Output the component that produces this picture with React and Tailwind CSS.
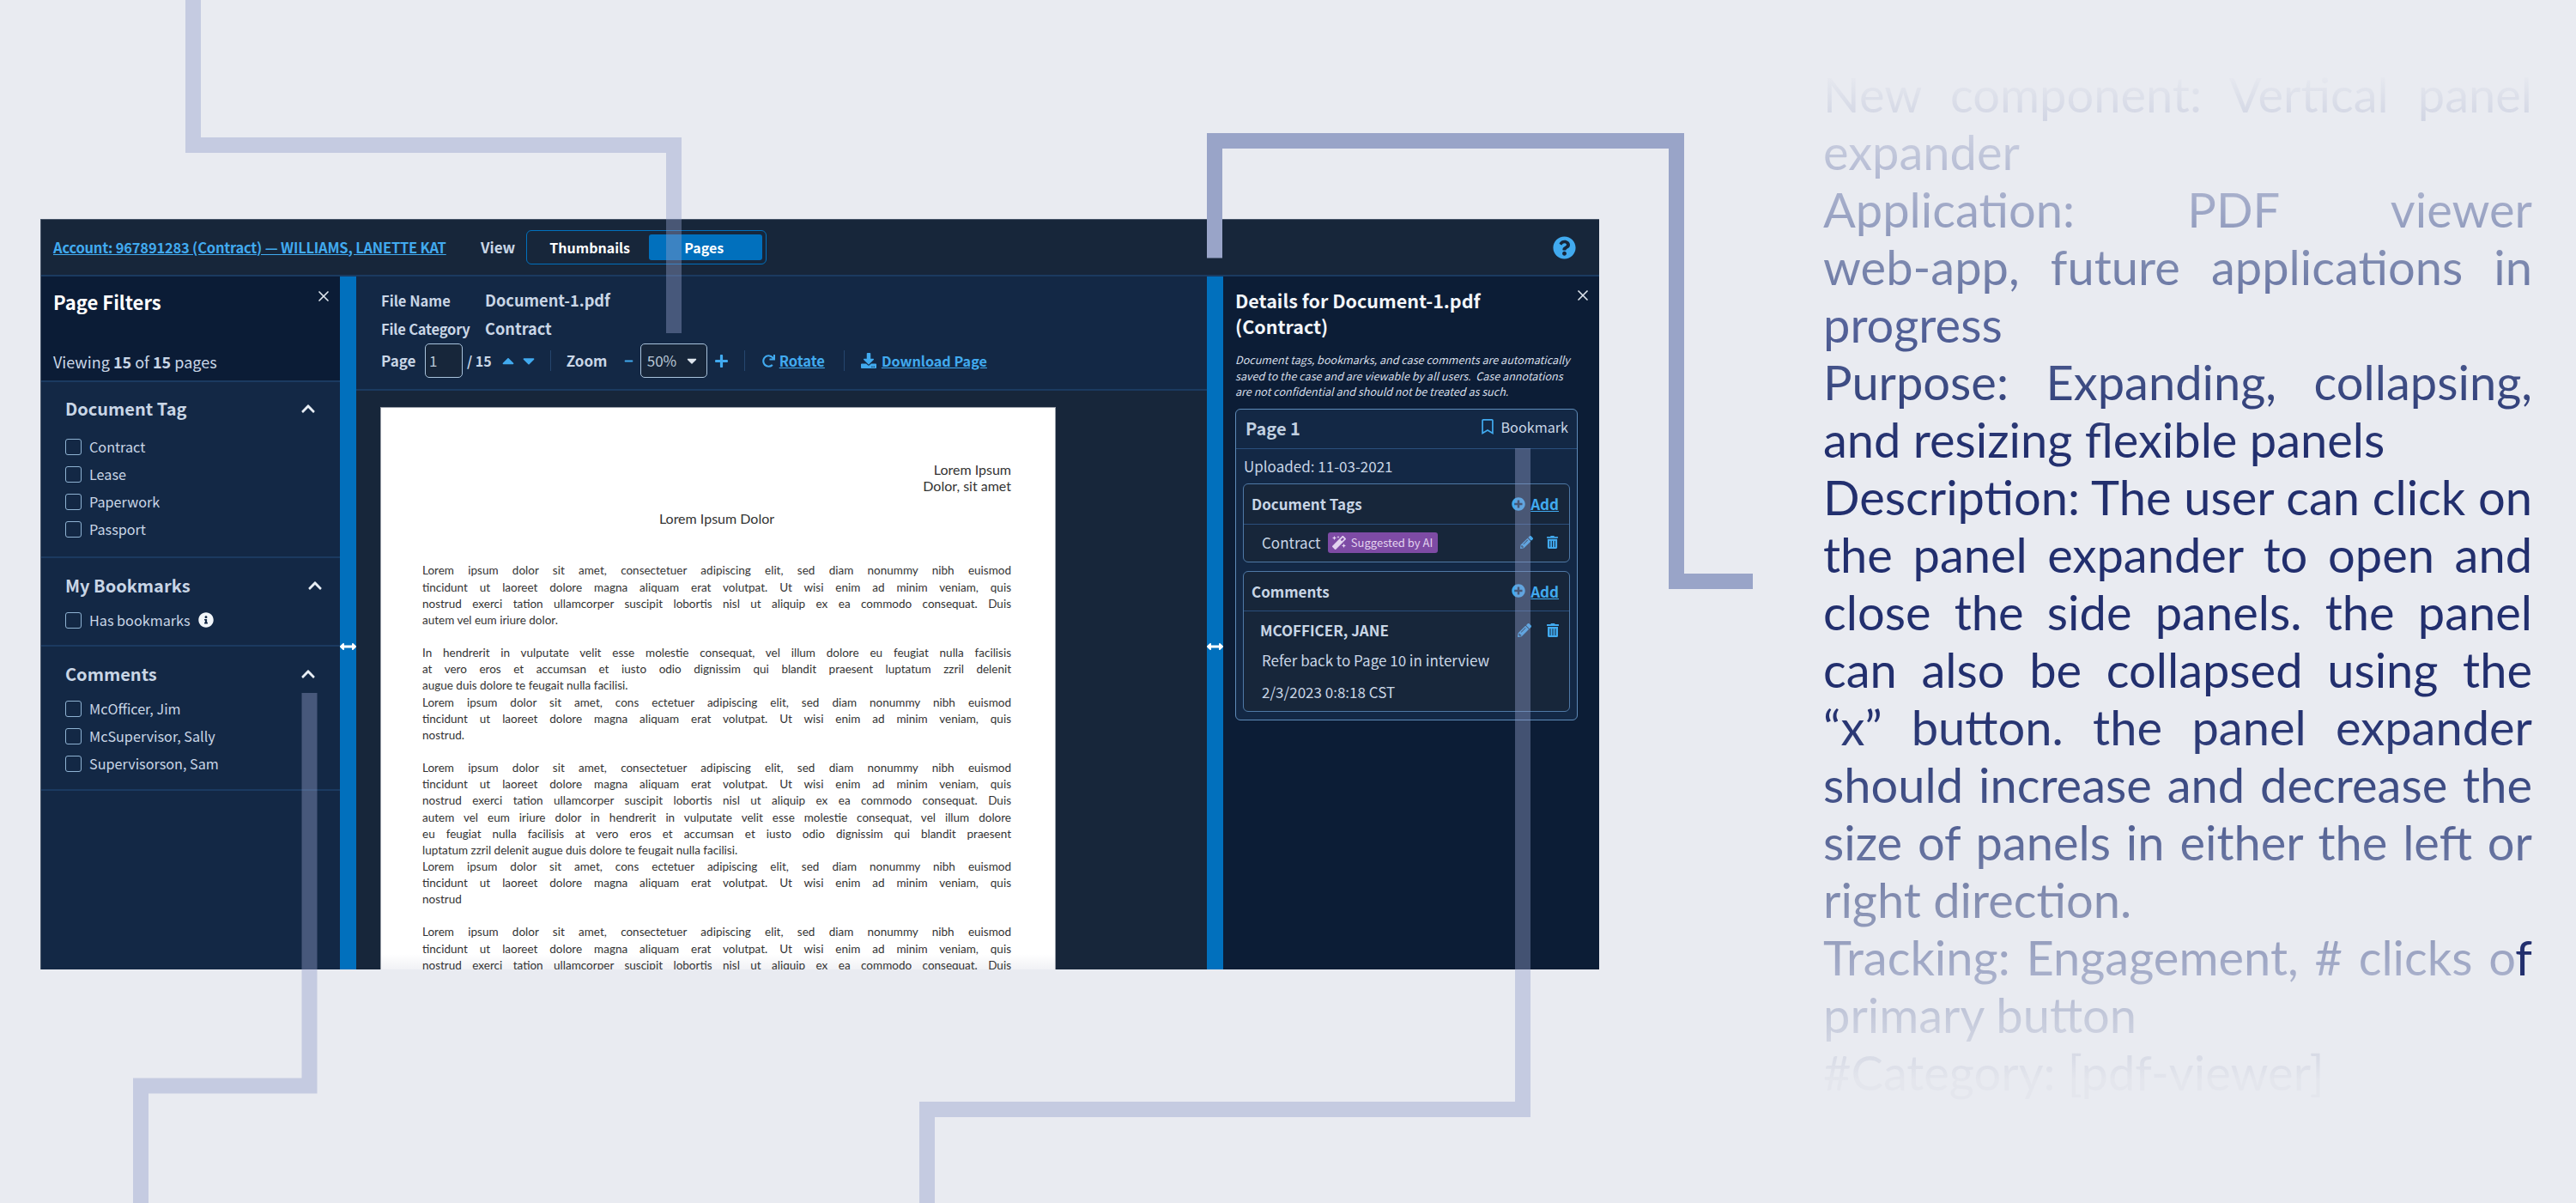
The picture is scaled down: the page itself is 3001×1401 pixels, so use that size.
import React from "react";
import { FaChevronUp, FaRegBookmark, FaArrowsAltH, FaPlusCircle, FaQuestionCircle, FaInfoCircle, FaMagic, FaRedo, FaDownload, FaPencilAlt, FaTrashAlt, FaCaretUp, FaCaretDown, FaMinus, FaPlus } from "react-icons/fa";
import { X } from "lucide-react";

const DOC = [
  { gap: "mt-[42px]", lines: ["Lorem ipsum dolor sit amet, consectetuer adipiscing elit, sed diam nonummy nibh euismod", "tincidunt ut laoreet dolore magna aliquam erat volutpat. Ut wisi enim ad minim veniam, quis", "nostrud exerci tation ullamcorper suscipit lobortis nisl ut aliquip ex ea commodo consequat. Duis"], last: "autem vel eum iriure dolor." },
  { gap: "mt-[19px]", lines: ["In hendrerit in vulputate velit esse molestie consequat, vel illum dolore eu feugiat nulla facilisis", "at vero eros et accumsan et iusto odio dignissim qui blandit praesent luptatum zzril delenit"], last: "augue duis dolore te feugait nulla facilisi." },
  { gap: "", lines: ["Lorem ipsum dolor sit amet, cons ectetuer adipiscing elit, sed diam nonummy nibh euismod", "tincidunt ut laoreet dolore magna aliquam erat volutpat. Ut wisi enim ad minim veniam, quis"], last: "nostrud." },
  { gap: "mt-[19px]", lines: ["Lorem ipsum dolor sit amet, consectetuer adipiscing elit, sed diam nonummy nibh euismod", "tincidunt ut laoreet dolore magna aliquam erat volutpat. Ut wisi enim ad minim veniam, quis", "nostrud exerci tation ullamcorper suscipit lobortis nisl ut aliquip ex ea commodo consequat. Duis", "autem vel eum iriure dolor in hendrerit in vulputate velit esse molestie consequat, vel illum dolore", "eu feugiat nulla facilisis at vero eros et accumsan et iusto odio dignissim qui blandit praesent"], last: "luptatum zzril delenit augue duis dolore te feugait nulla facilisi." },
  { gap: "", lines: ["Lorem ipsum dolor sit amet, cons ectetuer adipiscing elit, sed diam nonummy nibh euismod", "tincidunt ut laoreet dolore magna aliquam erat volutpat. Ut wisi enim ad minim veniam, quis"], last: "nostrud" },
  { gap: "mt-[19px]", lines: ["Lorem ipsum dolor sit amet, consectetuer adipiscing elit, sed diam nonummy nibh euismod", "tincidunt ut laoreet dolore magna aliquam erat volutpat. Ut wisi enim ad minim veniam, quis", "nostrud exerci tation ullamcorper suscipit lobortis nisl ut aliquip ex ea commodo consequat. Duis"], last: "" },
];

const NOTES = [
  ["New component: Vertical panel", true],
  ["expander", false],
  ["Application: PDF viewer", true],
  ["web-app, future applications in", true],
  ["progress", false],
  ["Purpose: Expanding, collapsing,", true],
  ["and resizing flexible panels", false],
  ["Description: The user can click on", true],
  ["the panel expander to open and", true],
  ["close the side panels. the panel", true],
  ["can also be collapsed using the", true],
  ["“x” button. the panel expander", true],
  ["should increase and decrease the", true],
  ["size of panels in either the left or", true],
  ["right direction.", false],
  ["TRACK", true],
  ["primary button", false],
  ["#Category: [pdf-viewer]", false],
];

function Check({ label, info }) {
  return (
    <div className="flex items-center h-[32px] text-[16.2px] text-[#c9d6e6]">
      <span className="w-[19px] h-[19px] rounded-[3px] border border-[#8fb3d3] mr-[9px] shrink-0" />
      <span>{label}</span>
      {info && <FaInfoCircle className="ml-[9px] text-[#f2f6fa] text-[18px]" />}
    </div>
  );
}

function FilterGroup({ title, items, chevron, body, list }) {
  return (
    <section className={`border-b-2 border-[#1b3a60] pl-[28px] ${body}`}>
      <div className={`flex items-center justify-between h-[28px] ${chevron}`}>
        <span className="font-bold text-[20px] text-[#c9d6e6]">{title}</span>
        <FaChevronUp className="text-[#e8eef5] text-[18px]" />
      </div>
      <div className={list}>
        {items.map((i) => <Check key={i.label} {...i} />)}
      </div>
    </section>
  );
}

function Splitter() {
  return (
    <div className="w-[19px] shrink-0 bg-[#0170bd] flex items-center justify-center pt-[54px]">
      <FaArrowsAltH className="text-white text-[20px]" />
    </div>
  );
}

function Divider() {
  return <span className="block w-px h-[24px] bg-[#25466e]" />;
}

function AddLink() {
  return (
    <span className="flex items-center text-[#41aaef]">
      <FaPlusCircle className="text-[16px] mr-[6px]" />
      <span className="font-bold underline text-[17px]">Add</span>
    </span>
  );
}

function Notes() {
  return (
    <div className="ml-[261px] mt-[76px] w-[826px] font-['Lato',sans-serif] text-[56px] leading-[67px] bg-clip-text text-transparent bg-[linear-gradient(180deg,#eceef3_0%,#dde0ea_3%,#c4c9dc_8%,#9ea7c6_14%,#7783ab_20%,#55639a_25%,#3c4b82_31%,#222f6e_37%,#222f6e_62%,#3f4e85_70%,#5d6a9a_75%,#8690b2_81%,#a2aac7_87%,#c5cadb_92%,#e4e6ed_98%)]">
      {NOTES.map(([t, j], i) =>
        t === "TRACK" ? (
          <div key={i} className="[text-align-last:justify] text-justify">Tracking: Engagement, # clicks o<span className="text-[#222f6e]">f</span></div>
        ) : (
          <div key={i} className={j ? "[text-align-last:justify] text-justify" : ""}>{t}</div>
        )
      )}
    </div>
  );
}

export default function App() {
  return (
    <div className="relative w-[3001px] h-[1401px] overflow-hidden bg-[#e9ebf1] flex items-start pl-[47px]">
      <div className="mt-[255px] w-[1816px] h-[874px] shrink-0 flex flex-col bg-[#17263a] border-t border-l border-[#48566a] font-['Noto_Sans_CJK_SC',sans-serif]">
        {/* top bar */}
        <header className="h-[66px] shrink-0 flex items-center border-b-2 border-[#1b3a60] pl-[14px] pr-[27px]">
          <a className="font-bold underline text-[#41aaef] text-[16.5px] tracking-[-0.2px] w-[457px] whitespace-nowrap">Account: 967891283 (Contract) — WILLIAMS, LANETTE KAT</a>
          <span className="ml-[41px] font-bold text-[17px] text-[#c9d6e6]">View</span>
          <div className="ml-[13px] w-[280px] h-[40px] rounded-[6px] border border-[#0170bd] flex items-center p-[4px] font-bold text-[16px] text-white">
            <span className="w-[138px] text-center">Thumbnails</span>
            <span className="w-[132px] h-[30px] rounded-[3px] bg-[#0170bd] flex items-center justify-center pr-[4px]">Pages</span>
          </div>
          <FaQuestionCircle className="ml-auto text-[#41aaef] text-[27px]" />
        </header>
        <main className="flex-1 min-h-0 flex">
          {/* left panel */}
          <aside className="w-[348px] shrink-0 flex flex-col bg-[#132845]">
            <div className="relative h-[123px] shrink-0 bg-[#0b1c36] border-b-2 border-[#1b3a60] pl-[14px] pt-[12px]">
              <h2 className="font-bold text-[22px] leading-[34px] text-white">Page Filters</h2>
              <X size={20} strokeWidth={2} className="absolute top-[13px] right-[9px] text-[#dfe6ee]" />
              <p className="mt-[40px] text-[18px] leading-[26px] text-[#c9d6e6]">Viewing <b>15</b> of <b>15</b> pages</p>
            </div>
            <FilterGroup title="Document Tag" chevron="pr-[28px]" body="h-[205px] pt-[17px]" list="mt-[14px]" items={[{ label: "Contract" }, { label: "Lease" }, { label: "Paperwork" }, { label: "Passport" }]} />
            <FilterGroup title="My Bookmarks" chevron="pr-[20px]" body="h-[103px] pt-[18px]" list="mt-[10px]" items={[{ label: "Has bookmarks", info: true }]} />
            <FilterGroup title="Comments" chevron="pr-[28px]" body="h-[168px] pt-[18px]" list="mt-[10px]" items={[{ label: "McOfficer, Jim" }, { label: "McSupervisor, Sally" }, { label: "Supervisorson, Sam" }]} />
          </aside>
          <Splitter />
          {/* viewer */}
          <div className="flex-1 min-w-0 flex flex-col">
            <div className="h-[133px] shrink-0 bg-[#132845] border-b-2 border-[#1b3a60] pl-[29px] pt-[11px] text-[#c9d6e6]">
              <div className="flex items-center h-[34px]">
                <span className="w-[121px] font-bold text-[16.5px]">File Name</span>
                <span className="font-bold text-[18.2px]">Document-1.pdf</span>
              </div>
              <div className="flex items-center h-[32px]">
                <span className="w-[121px] font-bold text-[16.5px] tracking-[-0.2px]">File Category</span>
                <span className="font-bold text-[18.2px]">Contract</span>
              </div>
              <div className="flex items-center h-[40px] mt-[1px] text-[17px]">
                <span className="font-bold w-[51px]">Page</span>
                <span className="w-[44px] h-[40px] rounded-[5px] border border-[#a9c3dc] bg-[#17263a] flex items-center pl-[4px] text-[17px] text-[#b9c6d6]">1</span>
                <span className="ml-[5px] font-bold text-[16px]">/ 15</span>
                <FaCaretUp className="ml-[8px] text-[#41aaef] text-[22px]" />
                <FaCaretDown className="ml-[2px] text-[#41aaef] text-[22px]" />
                <span className="ml-[14px]"><Divider /></span>
                <span className="ml-[18px] font-bold w-[66px]">Zoom</span>
                <FaMinus className="text-[#41aaef] text-[11px] ml-[1px]" />
                <span className="ml-[8px] w-[78px] h-[40px] rounded-[5px] border border-[#a9c3dc] bg-[#17263a] flex items-center justify-between pl-[7px] pr-[8px] text-[#b9c6d6]">50%<FaCaretDown className="text-[#dfe6ee] text-[18px]" /></span>
                <FaPlus className="ml-[8px] text-[#41aaef] text-[17px]" />
                <span className="ml-[18px]"><Divider /></span>
                <FaRedo className="ml-[20px] text-[#41aaef] text-[15px]" />
                <a className="ml-[5px] font-bold underline text-[#41aaef] text-[16.5px]">Rotate</a>
                <span className="ml-[22px]"><Divider /></span>
                <FaDownload className="ml-[19px] text-[#41aaef] text-[18px]" />
                <a className="ml-[6px] font-bold underline text-[#41aaef] text-[16.2px]">Download Page</a>
              </div>
            </div>
            <div className="flex-1 min-h-0 overflow-hidden pl-[28px] pt-[19px]">
              <div className="w-[787px] h-[680px] bg-[linear-gradient(180deg,#fff_0,#fff_636px,#eff0f4_656px,#eff0f4_100%)] border-l border-r border-t border-[#9a9fa8] pt-[62px] pl-[48px] pr-[51px] font-['Lato',sans-serif] text-[13.5px] leading-[19.15px] text-[#333]">
                <div className="text-right text-[16px]">Lorem Ipsum<br />Dolor, sit amet</div>
                <div className="text-center text-[16px] mt-[19px]">Lorem Ipsum Dolor</div>
                {DOC.map((b, i) => (
                  <div key={i} className={b.gap}>
                    {b.lines.map((l, k) => <div key={k} className="[text-align-last:justify] text-justify">{l}</div>)}
                    {b.last && <div>{b.last}</div>}
                  </div>
                ))}
              </div>
            </div>
          </div>
          <Splitter />
          {/* right panel */}
          <aside className="w-[438px] shrink-0 bg-[#0c1d36] pl-[14px] pr-[25px] pt-[13px] relative text-[#c9d6e6]">
            <X size={20} strokeWidth={2} className="absolute top-[12px] right-[9px] text-[#dfe6ee]" />
            <h2 className="font-bold text-[21.5px] leading-[30px] text-[#f2f5f9] w-[360px]">Details for Document-1.pdf (Contract)</h2>
            <p className="mt-[15px] italic text-[12.6px] leading-[18.6px] text-[#d7dfe9] whitespace-nowrap">Document tags, bookmarks, and case comments are automatically<br />saved to the case and are viewable by all users.&nbsp; Case annotations<br />are not confidential and should not be treated as such.</p>
            <div className="mt-[10px] rounded-[6px] border border-[#5f8bb8] bg-[#132845] pb-[9px] w-[399px]">
              <div className="h-[46px] border-b border-[#2b4f7c] flex items-center justify-between pl-[11px] pr-[10px]">
                <span className="font-bold text-[20px] text-[#c0cfe0]">Page 1</span>
                <span className="flex items-center text-[16.2px] mb-[4px]"><FaRegBookmark className="text-[#41aaef] text-[18px] mr-[6px]" />Bookmark</span>
              </div>
              <div className="h-[40px] flex items-center pl-[9px] text-[17px]">Uploaded: 11-03-2021</div>
              <div className="mx-[8px] h-[92px] rounded-[6px] border border-[#4f79a6] bg-[#17263a]">
                <div className="h-[47px] border-b border-[#2b4f7c] flex items-center justify-between pl-[9px] pr-[12px]">
                  <span className="font-bold text-[17px]">Document Tags</span>
                  <AddLink />
                </div>
                <div className="flex items-center h-[44px] pl-[21px] pr-[12px] text-[17px] mt-[-1px]">
                  <span>Contract</span>
                  <span className="ml-[8px] w-[128px] h-[24px] rounded-[3px] bg-[#7e4ba5] flex items-center justify-center text-[13px] whitespace-nowrap text-[#e2d3ef]"><FaMagic className="mr-[6px] text-[16px] shrink-0" />Suggested by AI</span>
                  <FaPencilAlt className="ml-auto text-[#41aaef] text-[15px]" />
                  <FaTrashAlt className="ml-[15px] text-[#41aaef] text-[15px]" />
                </div>
              </div>
              <div className="mt-[10px] mx-[8px] h-[164px] rounded-[6px] border border-[#4f79a6] bg-[#17263a]">
                <div className="h-[46px] border-b border-[#2b4f7c] flex items-center justify-between pl-[9px] pr-[12px]">
                  <span className="font-bold text-[17px]">Comments</span>
                  <AddLink />
                </div>
                <div className="flex items-center h-[44px] pl-[19px] pr-[11px]">
                  <span className="font-bold text-[17px]">MCOFFICER, JANE</span>
                  <FaPencilAlt className="ml-auto text-[#41aaef] text-[16px]" />
                  <FaTrashAlt className="ml-[17px] text-[#41aaef] text-[16px]" />
                </div>
                <div className="pl-[21px] text-[17px] leading-[37px] mt-[-6px]">Refer back to Page 10 in interview<br />2/3/2023 0:8:18 CST</div>
              </div>
            </div>
          </aside>
        </main>
      </div>
      <Notes />
      {/* annotation connectors drawn over the screenshot */}
      <svg className="absolute left-0 top-0 pointer-events-none" width="3001" height="1401" fill="none">
        <g stroke="#929fc9" strokeOpacity="0.41" strokeWidth="18">
          <path d="M225 0V169H785V388" />
          <path d="M360.5 807V1264.5H164V1401" />
          <path d="M1774 522V1292H1080V1401" />
        </g>
        <path d="M1415 300.5V164H1953V677H2042" stroke="#99a4c8" strokeWidth="18" />
      </svg>
    </div>
  );
}
